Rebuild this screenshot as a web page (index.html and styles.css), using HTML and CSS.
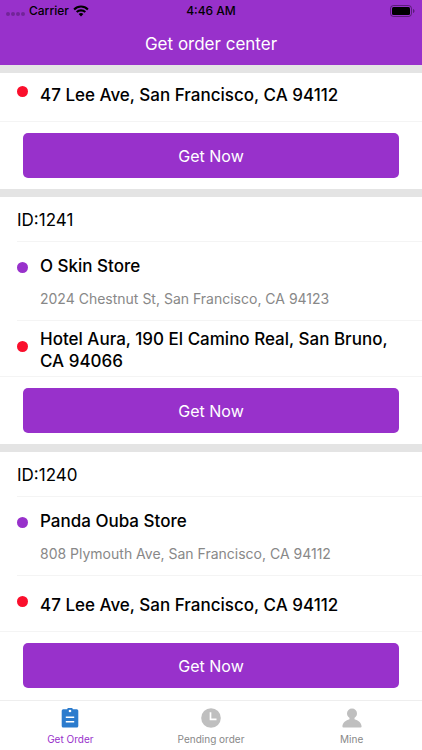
FILE: index.html
```html
<!DOCTYPE html>
<html lang="en">
<head>
<meta charset="utf-8">
<meta name="viewport" content="width=device-width, initial-scale=1">
<title>Get order center</title>
<link rel="stylesheet" href="styles.css">
</head>
<body>
<header class="top">
  <div class="status">
    <div class="carrier">
      <span class="signal"><i></i><i></i><i></i><i></i></span>
      <span>Carrier</span>
      <svg class="wifi" viewBox="0 0 16 12" aria-hidden="true">
        <path d="M8 11.6 5.6 9.1a3.4 3.4 0 0 1 4.800 0z"/>
        <path d="M3.700 7.100a6.100 6.100 0 0 1 8.600 0M1.100 4.400a9.800 9.800 0 0 1 13.800 0" fill="none" stroke="#000" stroke-width="2.100"/>
      </svg>
    </div>
    <time>4:46 AM</time>
    <svg class="battery" viewBox="0 0 26 12" aria-hidden="true">
      <rect x=".5" y=".5" width="21" height="11" rx="3" fill="none" stroke="#000" stroke-opacity=".4"/>
      <rect x="2" y="2" width="18" height="8" rx="1.5"/>
      <path d="M23 4c2 .6 2 3.400 0 4z" fill-opacity=".4"/>
    </svg>
  </div>
  <h1>Get order center</h1>
</header>

<main class="orders">
  <article class="order">
    <div class="dropoff"><span class="dot red"></span><p class="place">47 Lee Ave, San Francisco, CA 94112</p></div>
    <div class="action"><button type="button">Get Now</button></div>
  </article>

  <article class="order gap">
    <h2>ID:1241</h2>
    <div class="pickup">
      <span class="dot"></span>
      <div><p class="place">O Skin Store</p><p class="address">2024 Chestnut St, San Francisco, CA 94123</p></div>
    </div>
    <div class="dropoff"><span class="dot red"></span><p class="place">Hotel Aura, 190 El Camino Real, San Bruno, CA 94066</p></div>
    <div class="action"><button type="button">Get Now</button></div>
  </article>

  <article class="order gap">
    <h2>ID:1240</h2>
    <div class="pickup">
      <span class="dot"></span>
      <div><p class="place">Panda Ouba Store</p><p class="address">808 Plymouth Ave, San Francisco, CA 94112</p></div>
    </div>
    <div class="dropoff"><span class="dot red"></span><p class="place">47 Lee Ave, San Francisco, CA 94112</p></div>
    <div class="action"><button type="button">Get Now</button></div>
  </article>
</main>

<nav class="tabs">
  <a class="active" href="#orders">
    <svg viewBox="0 0 20 20" aria-hidden="true">
      <path fill="#2b7bcd" d="M3.200 1.300H7.200A2.900 2.900 0 0 1 12.800 1.300H16.800Q18.300 1.300 18.300 2.800V18Q18.300 19.500 16.800 19.500H3.200Q1.700 19.500 1.700 18V2.800Q1.700 1.300 3.200 1.300Z"/>
      <circle cx="10" cy="3" r="1.300" fill="#fff"/>
      <path d="M5.800 9.200H14.200M5.800 13.700H14.200" stroke="#fff" stroke-width="1.500"/>
    </svg>
    <span>Get Order</span>
  </a>
  <a href="#pending">
    <svg viewBox="0 0 20 20" aria-hidden="true">
      <circle cx="10" cy="10" r="9.800" fill="#bfbfbf"/>
      <path d="M9.500 4.200V11.300H15.500" fill="none" stroke="#fff" stroke-width="1.700"/>
    </svg>
    <span>Pending order</span>
  </a>
  <a href="#mine">
    <svg viewBox="0 0 20 20" aria-hidden="true">
      <circle cx="10" cy="5.500" r="5" fill="#bfbfbf"/>
      <path fill="#bfbfbf" d="M7.500 9H12.500V11.200C16 12.300 19.600 14.500 19.600 18.500Q19.600 19.600 18.500 19.600H1.500Q.4 19.600 .4 18.500C.4 14.500 4 12.300 7.500 11.200Z"/>
    </svg>
    <span>Mine</span>
  </a>
</nav>
</body>
</html>
```
FILE: styles.css
```css
* { box-sizing: border-box; }

body {
  margin: 0;
  height: 100vh;
  display: flex;
  flex-direction: column;
  background: #fff;
  color: #000;
  font-family: Inter, "Liberation Sans", sans-serif;
}

h1, h2, p { margin: 0; font-weight: 400; }

.top { flex: none; background: #9831cb; }

.status {
  display: grid;
  grid-template-columns: 1fr auto 1fr;
  align-items: center;
  height: 22px;
  padding: 0 6px;
  font-size: 12px;
  font-weight: 500;
  line-height: 20px;
}

.carrier { display: flex; align-items: center; gap: 4px; }
.signal { display: flex; gap: 1px; padding-top: 6px; }
.signal i { width: 4px; height: 4px; border-radius: 50%; background: rgb(0 0 0 / 25%); }
.wifi { width: 16px; height: 12px; }
.battery { width: 26px; height: 12px; justify-self: end; }

.top h1 {
  height: 43px;
  color: #fff;
  font-size: 17px;
  line-height: 44px;
  text-align: center;
}

.orders {
  position: relative;
  flex: 1;
  min-height: 0;
  padding-top: 1px;
  overflow: hidden;
}

/* Section divider pinned over the scrolled list */
.orders::before {
  content: "";
  position: absolute;
  inset: 0 0 auto;
  height: 8px;
  background: #e4e4e4;
}

.gap { border-top: 8px solid #e4e4e4; }

.order h2 {
  margin-left: 17px;
  height: 45px;
  border-bottom: 1px solid #f4f4f4;
  font-size: 17px;
  line-height: 46px;
}

.pickup, .dropoff { display: flex; gap: 12px; }

.pickup {
  height: 79px;
  margin-left: 17px;
  padding-top: 13px;
  border-bottom: 1px solid #f4f4f4;
}

.pickup .dot { margin-top: 7px; }

.dropoff {
  align-items: center;
  height: 56px;
  padding: 2px 20px 0 17px;
  border-bottom: 1px solid #f4f4f4;
}

.dot {
  flex: none;
  width: 11px;
  height: 11px;
  border-radius: 50%;
  background: #9831cb;
}

.dot.red { margin-bottom: 6px; background: #fa0f2c; }

.place { font-size: 17px; font-weight: 500; line-height: 22px; }
.address { margin-top: 12px; color: #888; font-size: 14px; line-height: 20px; }

.action { padding: 11px 23px; }

.action button {
  display: block;
  width: 100%;
  height: 45px;
  border: 0;
  border-radius: 5px;
  background: #9831cb;
  color: #fff;
  font: inherit;
  font-size: 16px;
}

.tabs {
  flex: none;
  display: flex;
  height: 50px;
  border-top: 1px solid #eee;
  background: #fff;
}

.tabs a {
  flex: 1;
  display: flex;
  flex-direction: column;
  align-items: center;
  gap: 4px;
  padding-top: 7px;
  color: #888;
  font-size: 10px;
  line-height: 14px;
  text-decoration: none;
}

.tabs .active { color: #9831cb; }
.tabs svg { width: 20px; height: 20px; }
```
